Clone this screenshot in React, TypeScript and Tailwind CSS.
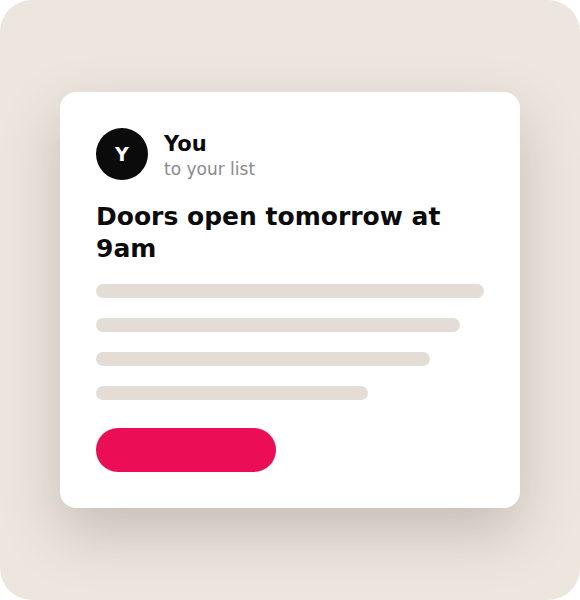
import React from 'react';

const bars = ['w-full', 'w-[364px]', 'w-[334px]', 'w-[272px]'];

const NotificationCard: React.FC = () => {
  return (
    <div className="w-[460px] rounded-[16px] bg-white px-[36px] pt-[36px] pb-[36px] shadow-[0_24px_60px_rgba(60,45,30,0.22)]">
      <div className="flex items-start gap-4">
        <div className="flex h-[52px] w-[52px] items-center justify-center rounded-full bg-[#0b0b0c] text-[19px] font-bold text-white">
          Y
        </div>
        <div className="flex flex-col pt-[3px]">
          <span className="text-[21px] font-bold leading-[26px] text-[#0b0b0c]">You</span>
          <span className="text-[17px] leading-[24px] text-[#8c8890]">to your list</span>
        </div>
      </div>

      <h2 className="mt-[20px] text-[25px] font-bold leading-[32px] text-[#0b0b0c]">
        Doors open tomorrow at 9am
      </h2>

      <div className="mt-[19px] flex flex-col gap-[20px]">
        {bars.map((w, i) => (
          <div key={i} className={`h-[14px] rounded-full bg-[#e4ddd5] ${w}`} />
        ))}
      </div>

      <div className="mt-[28px] h-[44px] w-[180px] rounded-full bg-[#eb0d55]" />
    </div>
  );
};

export default function App() {
  return (
    <div className="bg-white">
      <div
        className="flex h-[600px] w-[580px] items-start justify-center rounded-[32px] bg-[#ede6df] pt-[92px]"
        style={{ fontFamily: '"DejaVu Sans", "Noto Sans", sans-serif' }}
      >
        <NotificationCard />
      </div>
    </div>
  );
}
